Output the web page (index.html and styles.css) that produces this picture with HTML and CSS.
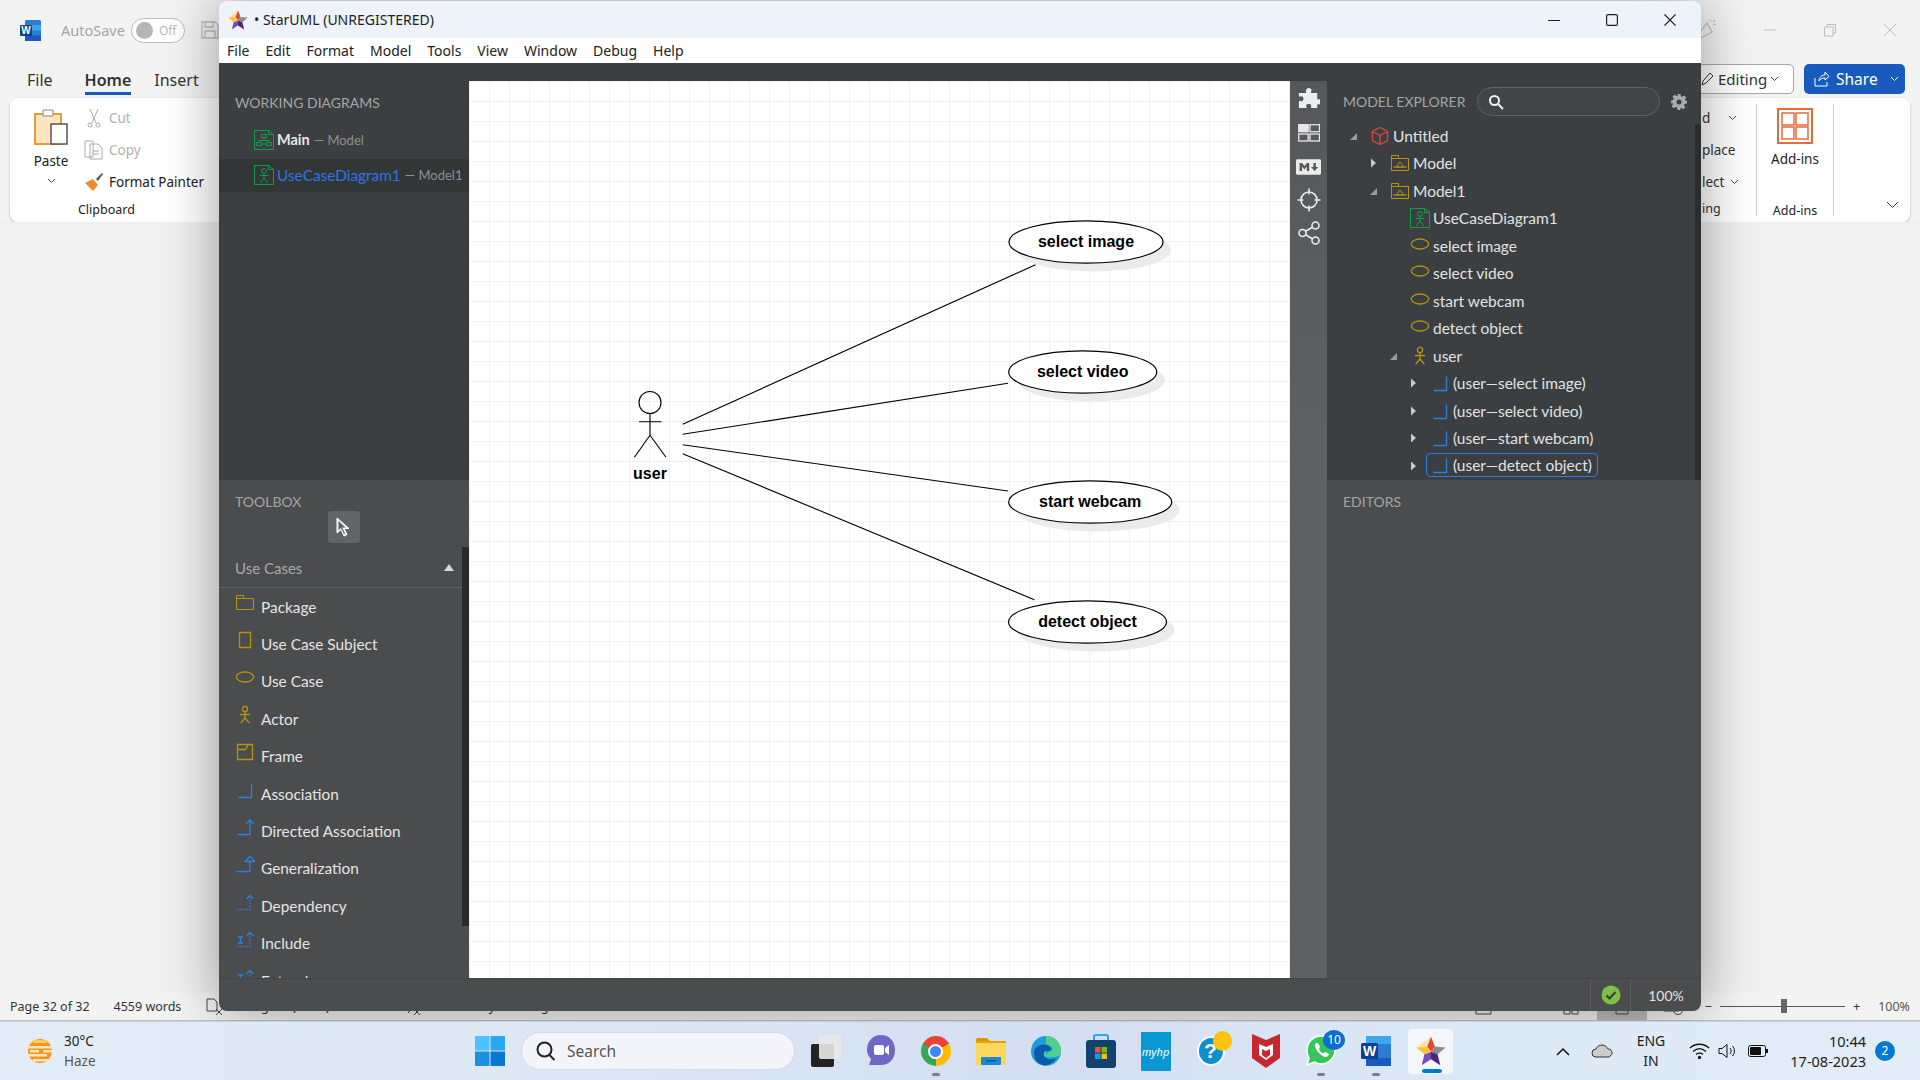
FILE: index.html
```html
<!DOCTYPE html>
<html lang="en">
<head>
<meta charset="utf-8">
<title>StarUML over Word</title>
<link rel="stylesheet" href="styles.css">
</head>
<body>
<svg class="sprite" xmlns="http://www.w3.org/2000/svg">
  <symbol id="star" viewBox="0 0 20 20">
    <polygon points="10,0.5 12.6,7 10,10.5 7.4,7" fill="#e8452f"/>
    <polygon points="12.6,7 19.8,7.6 14.4,12.2 10,10.5" fill="#8d8d8d"/>
    <polygon points="14.4,12.2 16.2,19.5 10,15.5 10,10.5" fill="#4a2a78"/>
    <polygon points="10,10.5 10,15.5 3.8,19.5 5.6,12.2" fill="#7a4bc0"/>
    <polygon points="7.4,7 10,10.5 5.6,12.2 0.2,7.6" fill="#fbc531"/>
    <polygon points="10,0.5 7.4,7 0.2,7.6" fill="#f7d774" opacity=".6"/>
  </symbol>
  <symbol id="dia-use" viewBox="0 0 20 20" fill="none" stroke="#0f9d4a">
    <path d="M.5 19.5V.5h14l5 4v15zM14.5.5v4h5"/>
    <circle cx="10" cy="6" r="2.4"/>
    <path d="M10 8.5V13M5.5 10.5h9M10 13l-4 5M10 13l4 5"/>
  </symbol>
  <symbol id="dia-class" viewBox="0 0 20 20" fill="none" stroke="#0f9d4a">
    <path d="M.5 19.5V.5h14l5 4v15zM14.5.5v4h5"/>
    <path d="M7.5 4.5h5v3h-5zM2.5 12.5h5v3h-5zM12.5 12.5h5v3h-5zM10 7.5v3M5 12.5v-2h10v2M7.5 14h5"/>
  </symbol>
  <symbol id="pkg" viewBox="0 0 20 20" fill="none" stroke="#b8930f">
    <path d="M1.5 17.5V2.5h7v3h10v12zM1.5 5.5h7"/>
    <path d="M6 14h8l-4-5zM3 14h14"/>
  </symbol>
  <symbol id="pkg-plain" viewBox="0 0 20 20" fill="none" stroke="#b8930f">
    <path d="M1.5 16.5V2.5h7v3h10v11zM1.5 5.5h7"/>
  </symbol>
  <symbol id="subject" viewBox="0 0 20 20" fill="none" stroke="#b8930f" stroke-width="1.3">
    <path d="M4.5 2.5h11v15h-11z"/>
  </symbol>
  <symbol id="ell" viewBox="0 0 20 20" fill="none" stroke="#b8930f" stroke-width="1.3">
    <ellipse cx="10" cy="10" rx="8.7" ry="5"/>
  </symbol>
  <symbol id="actor" viewBox="0 0 20 20" fill="none" stroke="#b8930f" stroke-width="1.3">
    <circle cx="10" cy="4" r="2.6"/>
    <path d="M10 6.7v6.5M5 9.5h10M10 13l-4.300 5M10 13l4.300 5"/>
  </symbol>
  <symbol id="frame" viewBox="0 0 20 20" fill="none" stroke="#b8930f" stroke-width="1.3">
    <path d="M2.500 2.500h15v15h-15zM2.500 7.500h8l3-5"/>
  </symbol>
  <symbol id="assoc" viewBox="0 0 20 20" fill="none" stroke="#2a82dc" stroke-width="1.3">
    <path d="M3.500 17.500h13V3.500"/>
  </symbol>
  <symbol id="directed" viewBox="0 0 20 20" fill="none" stroke="#2a82dc" stroke-width="1.3">
    <path d="M2.500 17.500h12.500V3M11 7l4-4 4 4"/>
  </symbol>
  <symbol id="general" viewBox="0 0 20 20" fill="none" stroke="#2a82dc" stroke-width="1.3">
    <path d="M1.500 17.500h13.500V7M10 7.500l5-5 5 5z"/>
  </symbol>
  <symbol id="depend" viewBox="0 0 20 20" fill="none" stroke="#2a82dc" stroke-width="1.3" stroke-dasharray="1.500 1.500">
    <path d="M2.500 17.500h12.500V4"/>
    <path d="M11.500 7l3.500-3.500 3.500 3.500" stroke-dasharray="none"/>
  </symbol>
  <symbol id="incl" viewBox="0 0 20 20" fill="none" stroke="#2a82dc" stroke-width="1.3">
    <path d="M2.500 17.500h12.500V4" stroke-dasharray="1.500 1.500"/>
    <path d="M11.500 7l3.500-3.500 3.500 3.500M3 8h5M3 14h5M5.500 8v6"/>
  </symbol>
  <symbol id="tri-open" viewBox="0 0 10 10"><polygon points="9,2 9,9 2,9" fill="#9a9c9e"/></symbol>
  <symbol id="tri-closed" viewBox="0 0 10 10"><polygon points="3,0.500 8,5 3,9.500" fill="#c9cacb"/></symbol>
</svg>

<div class="desktop">
  <div class="word">
    <div class="w-title">
      <svg class="w-logo" width="21" height="21" viewBox="0 0 21 21"><rect x="5" width="16" height="21" rx="1.500" fill="#2b7cd3"/><rect x="5" y="5" width="16" height="5.500" fill="#41a5ee"/><rect x="5" y="15.500" width="16" height="5.500" fill="#185abd"/><rect y="5" width="12" height="11" rx="1" fill="#103f91"/><text x="6" y="14" class="w-logo-t" text-anchor="middle">W</text></svg>
      <span class="w-autosave">AutoSave</span>
      <span class="w-toggle"><span class="w-knob"></span><span>Off</span></span>
      <svg class="w-save" width="18" height="18" viewBox="0 0 18 18" fill="none" stroke="#bbb" stroke-width="1.300"><path d="M1 1h13l3 3v13H1zM4 1v5h8V1M4 17v-7h10v7"/></svg>
      <div class="w-title-right">
        <svg width="22" height="22" viewBox="0 0 22 22" fill="none" stroke="#c2c2c2" stroke-width="1.300"><path d="M2 17L12 4l5 9-11 6zM15 2l1-1M18 6l3-1M18 3l2-2"/></svg>
        <svg width="14" height="14" viewBox="0 0 14 14" fill="none" stroke="#bdbdbd"><path d="M1 7h12"/></svg>
        <svg width="14" height="14" viewBox="0 0 14 14" fill="none" stroke="#bdbdbd"><path d="M1.500 4h8.500v9h-8.500zM4 4V1.500h8.500V10H10"/></svg>
        <svg width="14" height="14" viewBox="0 0 14 14" fill="none" stroke="#bdbdbd"><path d="M1 1l12 12M13 1L1 13"/></svg>
      </div>
    </div>
    <div class="w-tabs">
      <span class="w-tab w-tab-file">File</span>
      <span class="w-tab w-tab-on">Home</span>
      <span class="w-tab">Insert</span>
      <div class="w-actions">
        <span class="w-edit">
          <svg width="14" height="14" viewBox="0 0 14 14" fill="none" stroke="#333"><path d="M1 13l1-4 7-8 3 3-7 7z"/></svg>
          Editing
          <svg width="9" height="6" viewBox="0 0 9 6" fill="none" stroke="#444"><path d="M1 1l3.500 3.500L8 1"/></svg>
        </span>
        <span class="w-share">
          <svg width="16" height="16" viewBox="0 0 16 16" fill="none" stroke="#fff"><path d="M1 7v8h12v-4M5 10c0-4 3-6 6-6V1l4 4.500L11 9V7c-3 0-5 1-6 3z"/></svg>
          Share
          <svg class="w-share-c" width="9" height="6" viewBox="0 0 9 6" fill="none" stroke="#fff"><path d="M1 1l3.500 3.500L8 1"/></svg>
        </span>
      </div>
    </div>
    <div class="w-ribbon">
      <div class="w-paste">
        <svg width="36" height="38" viewBox="0 0 36 38"><path d="M2 6h26v30H2z" fill="#fde6bf" stroke="#ee9b33" stroke-width="2"/><path d="M10 2h10v6H10z" fill="#fff" stroke="#888"/><rect x="18" y="16" width="16" height="20" fill="#fff" stroke="#555" stroke-width="1.500"/></svg>
        <span class="w-paste-l">Paste</span>
        <svg width="9" height="6" viewBox="0 0 9 6" fill="none" stroke="#444"><path d="M1 1l3.500 3.500L8 1"/></svg>
      </div>
      <div class="w-clip">
        <div class="w-clip-row w-dim"><svg width="20" height="20" viewBox="0 0 20 20" fill="none" stroke="#aaa"><path d="M6 1l6 14M14 1L8 15"/><circle cx="6" cy="17" r="2"/><circle cx="14" cy="17" r="2"/></svg>Cut</div>
        <div class="w-clip-row w-dim"><svg width="20" height="20" viewBox="0 0 20 20" fill="none" stroke="#aaa"><path d="M1 1h8v16H1zM6 4h8l4 4v11H6zM9 11h6M9 14h6"/></svg>Copy</div>
        <div class="w-clip-row"><svg width="20" height="20" viewBox="0 0 20 20"><path d="M1 11l8-4 5 6-5 6z" fill="#ee8a2f"/><path d="M12 7l6-6 1 1-5 7z" fill="#555"/></svg>Format Painter</div>
      </div>
      <span class="w-group-l w-group-clip">Clipboard</span>
      <div class="w-ribbon-right">
        <div class="w-cut-group">
          <span class="w-line w-line-a">d<svg width="9" height="6" viewBox="0 0 9 6" fill="none" stroke="#444"><path d="M1 1l3.500 3.500L8 1"/></svg></span>
          <span class="w-line">place</span>
          <span class="w-line w-line-c">lect<svg width="9" height="6" viewBox="0 0 9 6" fill="none" stroke="#444"><path d="M1 1l3.500 3.500L8 1"/></svg></span>
          <span class="w-group-l w-group-ing">ing</span>
        </div>
        <div class="w-addins">
          <svg width="36" height="36" viewBox="0 0 36 36" fill="none" stroke="#e8693c" stroke-width="1.500"><rect x="1" y="1" width="34" height="34" stroke-width="2"/><rect x="5" y="5" width="12" height="12"/><rect x="19" y="5" width="12" height="12"/><rect x="5" y="19" width="12" height="12"/><rect x="19" y="19" width="12" height="12"/></svg>
          <span class="w-addins-l">Add-ins</span>
          <span class="w-group-l">Add-ins</span>
        </div>
        <div class="w-collapse"><svg width="13" height="8" viewBox="0 0 13 8" fill="none" stroke="#333"><path d="M1 1l5.500 5.500L12 1"/></svg></div>
      </div>
    </div>
    <div class="w-doc"></div>
    <div class="w-status">
      <span>Page 32 of 32</span>
      <span class="w-words">4559 words</span>
      <svg class="w-proof" width="17" height="18" viewBox="0 0 17 18" fill="none" stroke="#444"><path d="M1 1h7l3 3v9H1zM10 11l6 6M16 11l-6 6"/></svg>
      <span class="w-lang">English (India)</span>
      <svg class="w-acc-i" width="17" height="18" viewBox="0 0 17 18" fill="none" stroke="#444"><path d="M3 2l4 9M7 11l-3 4M10 11l6 6M16 11l-6 6"/></svg>
      <span class="w-acc">Accessibility: Investigate</span>
      <div class="w-zoomer">
        <svg class="w-z-focus" width="17" height="16" viewBox="0 0 17 16" fill="none" stroke="#444"><path d="M1 4V1h15v3M1 12v3h15v-3M4 5h9v6H4z"/></svg>
        <span class="w-focus">Focus</span>
        <svg class="w-z-book" width="16" height="16" viewBox="0 0 16 16" fill="none" stroke="#444"><path d="M1 3h6v12H1zM9 3h6v12H9z"/></svg>
        <span class="w-view"><svg width="14" height="16" viewBox="0 0 14 16" fill="none" stroke="#444"><path d="M1 1h12v14H1z"/></svg></span>
        <svg class="w-z-web" width="21" height="16" viewBox="0 0 21 16" fill="none" stroke="#444"><path d="M1 1h15v11H1z"/><circle cx="15" cy="11" r="4.500"/></svg>
        <span>−</span>
        <span class="w-track"><span class="w-thumb"></span></span>
        <span>+</span>
        <span class="w-pct">100%</span>
      </div>
    </div>
  </div>

  <div class="taskbar">
    <div class="weather">
      <svg width="28" height="28" viewBox="0 0 28 28"><circle cx="15" cy="14" r="12" fill="#f7941d"/><path d="M8 3h14v3H8z" fill="#ffcf4a"/><g fill="#f6e7c0"><rect x="1" y="9" width="26" height="2.500"/><rect x="5" y="13" width="9" height="2.500"/><rect x="18" y="13" width="9" height="2.500"/><rect x="0" y="17" width="22" height="2.500"/><rect x="8" y="22" width="18" height="2.500"/></g></svg>
      <div class="weather-t"><span>30°C</span><span class="weather-sub">Haze</span></div>
    </div>
    <div class="start"><svg width="30" height="30" viewBox="0 0 30 30"><rect width="14.500" height="14.500" fill="#4cc2ff"/><rect x="15.500" width="14.500" height="14.500" fill="#2ba6f0"/><rect y="15.500" width="14.500" height="14.500" fill="#1a90e0"/><rect x="15.500" y="15.500" width="14.500" height="14.500" fill="#0a78d0"/></svg></div>
    <div class="searchbox">
      <svg width="22" height="22" viewBox="0 0 22 22" fill="none" stroke="#222" stroke-width="2"><circle cx="9.500" cy="9.500" r="7"/><path d="M14.500 15l5 5"/></svg>
      <span>Search</span>
    </div>
    <div class="apps">
      <div class="app"><svg width="30" height="34" viewBox="0 0 30 34"><rect x="0" y="10" width="23" height="23" rx="2" fill="#222"/><rect x="8" y="1" width="22" height="24" rx="2" fill="#e9e9e9" opacity=".9"/></svg></div>
      <div class="app"><svg width="30" height="34" viewBox="0 0 30 34"><path d="M15 1c8 0 14 6 14 15s-6 15-14 15H3l2-6C2 22 1 19 1 16 1 7 7 1 15 1z" fill="#6f66c6"/><rect x="8" y="11" width="10" height="10" rx="2" fill="#fff"/><path d="M19 14l4-3v10l-4-3z" fill="#fff"/></svg></div>
      <div class="app app-run"><span class="chrome"><span class="chrome-in"></span></span></div>
      <div class="app"><svg width="30" height="28" viewBox="0 0 30 28"><path d="M0 3a2 2 0 0 1 2-2h9l3 3v4H0z" fill="#d99a00"/><rect y="4" width="30" height="24" rx="1" fill="#fbd75b"/><rect y="4" width="30" height="2" fill="#e6a400"/><rect x="5" y="20" width="20" height="8" rx="1" fill="#1b87d8"/><rect x="10" y="23" width="10" height="1.500" fill="#0b4f8c"/></svg></div>
      <div class="app"><svg width="30" height="30" viewBox="0 0 30 30"><circle cx="15" cy="15" r="15" fill="#1b9de2"/><path d="M15 0a15 15 0 0 1 15 15c0 4-3 6-7 6H15c0-7 8-4 6-9S5 9 5 17c0 7 7 13 14 12.500A15 15 0 0 1 15 30" fill="#4fd18b"/><path d="M3 17c0-9 14-11 17-5 1 2-1 3-4 3-5 0-4 6 1 8 4 1 7 0 9-2-3 6-9 9-14 8C7 28 3 23 3 17z" fill="#0c5ba8"/></svg></div>
      <div class="app"><svg width="30" height="34" viewBox="0 0 30 34"><path d="M8 8V3a2 2 0 0 1 2-2h10a2 2 0 0 1 2 2v5" fill="none" stroke="#2fa6e8" stroke-width="2"/><rect y="6" width="30" height="28" rx="3" fill="#14426f"/><rect x="9" y="13" width="5.500" height="5.500" fill="#f25022"/><rect x="15.500" y="13" width="5.500" height="5.500" fill="#7fba00"/><rect x="9" y="19.500" width="5.500" height="5.500" fill="#00a4ef"/><rect x="15.500" y="19.500" width="5.500" height="5.500" fill="#ffb900"/></svg></div>
      <div class="app"><span class="myhp">myhp</span></div>
      <div class="app app-help"><span class="help">?</span><span class="help-dot"></span></div>
      <div class="app"><svg width="28" height="34" viewBox="0 0 28 34"><path d="M0 0l14 6 14-6v24l-14 10L0 24z" fill="#c5282f"/><path d="M7 10l7 3 7-3v11l-7 5-7-5z" fill="#fff"/><path d="M10 15l4 2 4-2v6l-4 3-4-3z" fill="#c5282f"/></svg></div>
      <div class="app app-run app-wa"><svg width="30" height="32" viewBox="0 0 30 32"><path d="M15 1a14 14 0 0 1 0 28c-3 0-5-1-7-2l-7 3 2-7c-1-2-2-4-2-8A14 14 0 0 1 15 1z" fill="#37c45a" stroke="#fff" stroke-width="1.500"/><path d="M10 8c-2 2-1 6 3 10s7 5 9 3l1-2-4-2-1.500 1.500c-2-.5-4-3-4.500-4.500L14 12l-2-4z" fill="#fff"/></svg><span class="wa-badge">10</span></div>
      <div class="app app-run"><svg width="30" height="30" viewBox="0 0 30 30"><rect x="5" width="25" height="30" rx="2" fill="#2b7cd3"/><rect x="5" y="0" width="25" height="8" fill="#41a5ee"/><rect x="5" y="22" width="25" height="8" fill="#185abd"/><rect y="7" width="17" height="16" rx="1.500" fill="#103f91"/><text x="8.500" y="20" class="app-w" text-anchor="middle">W</text></svg></div>
      <div class="app app-star"><svg width="30" height="30"><use href="#star"/></svg><span class="star-bar"></span></div>
    </div>
    <div class="tray">
      <svg width="14" height="9" viewBox="0 0 14 9" fill="none" stroke="#111" stroke-width="1.500"><path d="M1 8l6-6 6 6"/></svg>
      <svg class="tray-cloud" width="22" height="14" viewBox="0 0 22 14"><path d="M5 13a4 4 0 0 1 0-8c1-3 4-4 6-4 3 0 5 2 6 4 3 0 4 2 4 4s-2 4-4 4z" fill="#ccc" stroke="#333"/></svg>
      <div class="tray-lang"><span>ENG</span><span>IN</span></div>
      <svg class="tray-wifi" width="21" height="16" viewBox="0 0 21 16" fill="none" stroke="#111" stroke-width="1.300"><path d="M1 5c5-5 14-5 19 0M4 8.500c4-3.500 9-3.500 13 0M7 11.500c2-1.500 5-1.500 7 0"/><circle cx="10.500" cy="14.500" r="1" fill="#111"/></svg>
      <svg width="18" height="16" viewBox="0 0 18 16" fill="none" stroke="#111"><path d="M1 5.500v5h3l5 4v-13l-5 4zM12 5c1.500 2 1.500 4 0 6M14.500 3c2.500 3 2.500 7 0 10"/></svg>
      <svg class="tray-batt" width="20" height="12" viewBox="0 0 20 12"><rect x=".5" y=".5" width="17" height="11" rx="2" fill="none" stroke="#111"/><rect x="2" y="2" width="11" height="8" rx="1" fill="#111"/><rect x="18" y="4" width="2" height="4" fill="#111"/></svg>
      <div class="tray-clock"><span>10:44</span><span>17-08-2023</span></div>
      <span class="tray-badge">2</span>
    </div>
  </div>

  <section class="win">
    <header class="win-title">
      <svg width="20" height="20"><use href="#star"/></svg>
      <span class="win-title-t">• StarUML (UNREGISTERED)</span>
      <div class="win-ctrl">
        <svg width="12" height="12" viewBox="0 0 12 12" fill="none" stroke="#222"><path d="M0 6.500h12"/></svg>
        <svg width="12" height="12" viewBox="0 0 12 12" fill="none" stroke="#222" stroke-width="1.200"><rect x=".6" y=".6" width="10.800" height="10.800" rx="1.500"/></svg>
        <svg width="12" height="12" viewBox="0 0 12 12" fill="none" stroke="#222" stroke-width="1.100"><path d="M.5.500l11 11M11.500.500l-11 11"/></svg>
      </div>
    </header>
    <nav class="win-menu">
      <span>File</span><span>Edit</span><span>Format</span><span>Model</span><span>Tools</span><span>View</span><span>Window</span><span>Debug</span><span>Help</span>
    </nav>
    <div class="win-main">
      <aside class="col-left">
        <div class="working">
          <h2 class="head">WORKING DIAGRAMS</h2>
          <div class="wd-row"><svg class="ic20" width="20" height="20"><use href="#dia-class"/></svg><span class="wd-name">Main</span><span class="wd-sub">— Model</span></div>
          <div class="wd-row wd-on"><svg class="ic20" width="20" height="20"><use href="#dia-use"/></svg><span class="wd-name-on">UseCaseDiagram1</span><span class="wd-sub">— Model1</span></div>
        </div>
        <div class="toolbox">
          <h2 class="head head-tb">TOOLBOX</h2>
          <div class="tb-tool"><svg width="18" height="22" viewBox="0 0 18 22"><path d="M2 2l0 15 4-3.500 3 6.500 3-1.500-3-6h5z" fill="#e8e8e8" stroke="#fff"/><path d="M3.500 5l0 9 2.500-2 3 6 1-.5-3-6h3.500z" fill="#5f6266"/></svg></div>
          <div class="tb-body">
            <div class="tb-content">
              <div class="tb-sec"><span>Use Cases</span><span class="tb-up"></span></div>
              <div class="tb-row"><svg class="tb-ic" width="20" height="20"><use href="#pkg-plain"/></svg>Package</div>
              <div class="tb-row"><svg class="tb-ic" width="20" height="20"><use href="#subject"/></svg>Use Case Subject</div>
              <div class="tb-row"><svg class="tb-ic" width="20" height="20"><use href="#ell"/></svg>Use Case</div>
              <div class="tb-row"><svg class="tb-ic" width="20" height="20"><use href="#actor"/></svg>Actor</div>
              <div class="tb-row"><svg class="tb-ic" width="20" height="20"><use href="#frame"/></svg>Frame</div>
              <div class="tb-row"><svg class="tb-ic" width="20" height="20"><use href="#assoc"/></svg>Association</div>
              <div class="tb-row"><svg class="tb-ic" width="20" height="20"><use href="#directed"/></svg>Directed Association</div>
              <div class="tb-row"><svg class="tb-ic" width="20" height="20"><use href="#general"/></svg>Generalization</div>
              <div class="tb-row"><svg class="tb-ic" width="20" height="20"><use href="#depend"/></svg>Dependency</div>
              <div class="tb-row"><svg class="tb-ic" width="20" height="20"><use href="#incl"/></svg>Include</div>
              <div class="tb-row"><svg class="tb-ic" width="20" height="20"><use href="#incl"/></svg>Extend</div>
            </div>
            <div class="tb-scroll"></div>
          </div>
        </div>
      </aside>

      <div class="col-center">
        <div class="canvas">
          <svg class="diagram" width="821" height="897" viewBox="469 81 821 897">
            <g class="d-shadow">
              <ellipse cx="1094" cy="250" rx="77" ry="21.500"/>
              <ellipse cx="1091" cy="380" rx="74" ry="21.500"/>
              <ellipse cx="1098" cy="510" rx="81.500" ry="21.500"/>
              <ellipse cx="1095.500" cy="630" rx="79" ry="21.500"/>
            </g>
            <g class="d-line">
              <path d="M682.700 424.300L1035.500 264.700"/>
              <path d="M682.700 434.300L1008 383.300"/>
              <path d="M682.700 444.700L1008 491"/>
              <path d="M682.700 453.700L1034.400 599.700"/>
              <circle cx="650" cy="402.500" r="11"/>
              <path d="M639 421.700H661.500M650 413.500V435.300M650 435.300L634.400 457.300M650 435.300L666 457.300"/>
            </g>
            <g class="d-node">
              <ellipse cx="1086" cy="242" rx="77" ry="21.200"/>
              <ellipse cx="1082.700" cy="372" rx="74" ry="21.200"/>
              <ellipse cx="1090.200" cy="502" rx="81.500" ry="21.200"/>
              <ellipse cx="1087.500" cy="622" rx="79" ry="21.200"/>
            </g>
            <g class="d-text" text-anchor="middle">
              <text x="1086" y="241" dy=".4em">select image</text>
              <text x="1082.700" y="371" dy=".4em">select video</text>
              <text x="1090.200" y="501" dy=".4em">start webcam</text>
              <text x="1087.500" y="621" dy=".4em">detect object</text>
              <text x="650" y="479">user</text>
            </g>
          </svg>
        </div>
        <div class="rail">
          <svg width="22" height="22" viewBox="0 0 24 24"><path fill="#eceded" d="M9 3.500C9 2 10.200 1 11.800 1s2.900 1 2.900 2.500c0 1-.7 1.500-.7 2.200 0 .6.500.8 1.200.8H21v6c0 .7.300 1 .8 1 .6 0 1-.5 1.700-.5.800 0 .5 2 .5 3s.2 3-.5 3c-.7 0-1.100-.5-1.700-.5-.5 0-.8.300-.8 1V23h-6c-.7 0-1-.3-1-.8 0-.6.500-1 .5-1.700 0-1.300-1.200-2-2.800-2s-2.800.7-2.800 2c0 .7.600 1.100.6 1.700 0 .5-.3.800-1 .8H1v-7c0-.7.400-1 .9-1 .6 0 1 .6 1.900.6 1.300 0 2.200-1.200 2.200-2.800S5.100 10 3.800 10c-.9 0-1.300.6-1.900.6-.5 0-.9-.3-.9-1V6.500h7c.7 0 1-.3 1-.8 0-.7-.5-1.200-.5-2.200z"/></svg>
          <svg width="22" height="18" viewBox="0 0 22 18" fill="none" stroke="#e6e6e6" stroke-width="1.300"><rect x=".7" y=".7" width="9.500" height="7" fill="#e6e6e6"/><rect x="12" y=".7" width="9.500" height="7"/><rect x=".7" y="10" width="9.500" height="7"/><rect x="12" y="10" width="9.500" height="7"/></svg>
          <svg width="25" height="16" viewBox="0 0 208 128"><rect width="208" height="128" rx="12" fill="#ececec"/><path fill="#55575a" d="M30 98V30h20l20 25 20-25h20v68H90V59L70 84 50 59v39zm125 0l-30-33h20V30h20v35h20z"/></svg>
          <svg width="24" height="24" viewBox="0 0 24 24" fill="none" stroke="#ececec" stroke-width="1.600"><circle cx="12" cy="12" r="8"/><path d="M12 .5v6M12 17.500v6M.5 12h6M17.500 12h6"/></svg>
          <svg width="22" height="24" viewBox="0 0 22 24" fill="none" stroke="#ececec" stroke-width="1.600"><circle cx="17.500" cy="4.500" r="3.500"/><circle cx="4.500" cy="12" r="3.500"/><circle cx="17.500" cy="19.500" r="3.500"/><path d="M7.500 10.200l7-4M7.500 13.800l7 4"/></svg>
        </div>
      </div>

      <aside class="col-right">
        <div class="explorer">
          <div class="ex-head">
            <h2 class="head head-ex">MODEL EXPLORER</h2>
            <div class="ex-search"><svg width="16" height="16" viewBox="0 0 16 16" fill="none" stroke="#f0f0f0" stroke-width="2"><circle cx="6.500" cy="6.500" r="4.500"/><path d="M10 10l5 5"/></svg></div>
            <svg class="ex-gear" width="16" height="16" viewBox="0 0 16 16"><path fill="#a9abac" fill-rule="evenodd" d="M6.500 0h3l.4 2.200 1.400.6L13.200 1.500l2.100 2.100-1.300 1.900.6 1.400L16 6.500v3l-2.400.4-.6 1.400 1.300 1.900-2.100 2.100-1.900-1.300-1.400.6L9.500 16h-3l-.4-2.400-1.400-.6-1.900 1.300-2.100-2.100L2 10.300l-.6-1.400L0 9.500v-3l2.200-.4.600-1.400L1.500 2.800l2.100-2.100 1.900 1.300 1.400-.6zM8 5.500a2.500 2.500 0 1 0 0 5 2.500 2.500 0 0 0 0-5z"/></svg>
          </div>
          <div class="tree">
            <div class="t-row lv0"><svg class="t-arrow" width="10" height="10"><use href="#tri-open"/></svg><svg class="t-ic" width="20" height="20" viewBox="0 0 20 20" fill="none" stroke="#d24a3c" stroke-width="1.400"><path d="M10 1.500l7.500 4v9l-7.500 4-7.500-4v-9zM2.500 5.500l7.500 4 7.500-4M10 9.500v9"/></svg><span>Untitled</span></div>
            <div class="t-row lv1"><svg class="t-arrow" width="10" height="10"><use href="#tri-closed"/></svg><svg class="t-ic" width="20" height="20"><use href="#pkg"/></svg><span>Model</span></div>
            <div class="t-row lv1"><svg class="t-arrow" width="10" height="10"><use href="#tri-open"/></svg><svg class="t-ic" width="20" height="20"><use href="#pkg"/></svg><span>Model1</span></div>
            <div class="t-row lv2"><span class="t-arrow"></span><svg class="t-ic" width="20" height="20"><use href="#dia-use"/></svg><span>UseCaseDiagram1</span></div>
            <div class="t-row lv2"><span class="t-arrow"></span><svg class="t-ic t-up" width="20" height="20"><use href="#ell"/></svg><span>select image</span></div>
            <div class="t-row lv2"><span class="t-arrow"></span><svg class="t-ic t-up" width="20" height="20"><use href="#ell"/></svg><span>select video</span></div>
            <div class="t-row lv2"><span class="t-arrow"></span><svg class="t-ic t-up" width="20" height="20"><use href="#ell"/></svg><span>start webcam</span></div>
            <div class="t-row lv2"><span class="t-arrow"></span><svg class="t-ic t-up" width="20" height="20"><use href="#ell"/></svg><span>detect object</span></div>
            <div class="t-row lv2"><svg class="t-arrow" width="10" height="10"><use href="#tri-open"/></svg><svg class="t-ic" width="20" height="20"><use href="#actor"/></svg><span>user</span></div>
            <div class="t-row lv3"><svg class="t-arrow" width="10" height="10"><use href="#tri-closed"/></svg><svg class="t-ic" width="20" height="20"><use href="#assoc"/></svg><span>(user—select image)</span></div>
            <div class="t-row lv3"><svg class="t-arrow" width="10" height="10"><use href="#tri-closed"/></svg><svg class="t-ic" width="20" height="20"><use href="#assoc"/></svg><span>(user—select video)</span></div>
            <div class="t-row lv3"><svg class="t-arrow" width="10" height="10"><use href="#tri-closed"/></svg><svg class="t-ic" width="20" height="20"><use href="#assoc"/></svg><span>(user—start webcam)</span></div>
            <div class="t-row lv3"><svg class="t-arrow" width="10" height="10"><use href="#tri-closed"/></svg><span class="t-sel"><svg class="t-ic" width="20" height="20"><use href="#assoc"/></svg><span>(user—detect object)</span></span></div>
          </div>
          <div class="ex-scroll"></div>
        </div>
        <div class="editors"><h2 class="head">EDITORS</h2></div>
      </aside>
    </div>
    <footer class="win-status">
      <span class="st-cell"><svg width="20" height="20" viewBox="0 0 20 20"><circle cx="10" cy="10" r="9.500" fill="#7cc142"/><path d="M5.500 10.500l3 3 6-6.500" fill="none" stroke="#3a3d3f" stroke-width="2.200"/></svg></span>
      <span class="st-zoom">100%</span>
    </footer>
  </section>
</div>
</body>
</html>
```

FILE: styles.css
```css
* { box-sizing: border-box; }
html, body { margin: 0; padding: 0; width: 1920px; height: 1080px; overflow: hidden; }
body { font-family: "Open Sans", "Noto Sans", sans-serif; color: #222; background: #f1f1f1; }
.sprite { display: none; }
svg { flex: none; display: block; }

.desktop { position: relative; width: 1920px; height: 1080px; display: flex; flex-direction: column; overflow: hidden; }

/* Word behind */
.word { flex: 1; display: flex; flex-direction: column; background: #f3f3f3; min-height: 0; }
.w-title { height: 60px; flex: none; display: flex; align-items: center; padding: 0 20px; font-size: 14px; color: #a5a5a5; }
.w-logo-t { font: bold 10px "Liberation Sans", sans-serif; fill: #fff; }
.app-w { font: bold 14px "Liberation Sans", sans-serif; fill: #fff; }
.w-autosave { margin-left: 20px; font-family: "Noto Sans", sans-serif; font-size: 14.5px; }
.w-toggle { margin-left: 6px; width: 54px; height: 25px; border: 1px solid #bdbdbd; border-radius: 13px; background: #fff; display: flex; align-items: center; gap: 6px; padding-left: 4px; font-size: 12px; color: #b5b5b5; }
.w-knob { width: 17px; height: 17px; border-radius: 50%; background: #b5b5b5; }
.w-save { margin-left: 16px; }
.w-title-right { margin-left: auto; display: flex; align-items: center; gap: 46px; margin-right: 3px; }
.w-tabs { height: 38px; flex: none; display: flex; align-items: flex-start; padding-left: 27px; gap: 23px; font-size: 16px; color: #333; font-family: "Noto Sans", sans-serif; }
.w-tab { height: 35px; display: flex; align-items: center; padding-top: 5px; }
.w-tab-file { margin-right: 9px; }
.w-tab-on { font-weight: 600; color: #333; border-bottom: 3px solid #185abd; padding-top: 8px; }
.w-actions { margin-left: auto; margin-right: 15px; margin-top: 4px; display: flex; gap: 10px; align-items: center; }
.w-edit { width: 104px; height: 30px; display: flex; align-items: center; gap: 3px; padding-left: 10px; background: #fff; border: 1px solid #a8a8a8; border-radius: 5px; font-size: 15px; }
.w-share { width: 101px; height: 30px; display: flex; align-items: center; gap: 6px; padding-left: 10px; background: #185abd; color: #fff; border-radius: 5px; font-size: 15.5px; }
.w-share-c { margin-left: 6px; }
.w-ribbon { margin: 0 10px; height: 124px; flex: none; background: #fff; border-radius: 8px; box-shadow: 0 1px 3px rgba(0,0,0,.2); display: flex; font-family: "Noto Sans", sans-serif; font-size: 13.5px; }
.w-paste { width: 66px; margin-left: 8px; display: flex; flex-direction: column; align-items: center; padding-top: 10px; }
.w-paste-l { margin: 6px 0 8px; font-size: 13.5px; line-height: 18px; }
.w-clip { padding-top: 4px; display: flex; flex-direction: column; }
.w-clip-row { height: 32px; flex: none; display: flex; align-items: center; gap: 5px; font-size: 13.5px; white-space: nowrap; }
.w-dim { color: #b0b0b0; }
.w-group-l { font-size: 12.5px; }
.w-group-clip { align-self: flex-end; margin: 0 0 4px -126px; }
.w-ribbon-right { margin-left: auto; display: flex; height: 100%; }
.w-cut-group { width: 66px; padding-left: 11px; display: flex; flex-direction: column; color: #333; border-right: 1px solid #ccc; margin-top: 6px; height: 112px; }
.w-line { height: 32px; flex: none; display: flex; align-items: center; gap: 18px; }
.w-line-a { margin-top: -2px; }
.w-line-c { gap: 6px; }
.w-group-ing { margin-top: 2px; }
.w-addins { width: 77px; margin-top: 6px; height: 112px; display: flex; flex-direction: column; align-items: center; padding-top: 4px; border-right: 1px solid #ccc; }
.w-addins-l { margin-top: 6px; height: 52px; flex: none; }
.w-collapse { width: 76px; display: flex; align-items: flex-end; justify-content: flex-end; padding: 0 11px 13px 0; }
.w-doc { flex: 1; background: #f0f0f0; }
.w-status { height: 28px; flex: none; display: flex; align-items: center; padding: 0 10px; background: #f3f3f3; border-bottom: 1px solid #c2c2c2; font-size: 12.5px; font-family: "Noto Sans", sans-serif; color: #333; white-space: nowrap; }
.w-words { margin-left: 24px; }
.w-proof { margin-left: 25px; }
.w-lang { margin-left: 23px; }
.w-acc-i { margin-left: 74px; }
.w-acc { margin-left: 4px; }
.w-zoomer { margin-left: auto; display: flex; align-items: center; gap: 8px; }
.w-z-focus { margin-right: -4px; }
.w-focus { margin-right: 25px; }
.w-z-book { margin-right: 10px; }
.w-view { width: 50px; height: 26px; background: #bdbdbd; margin-right: 8px; display: flex; align-items: center; justify-content: center; }
.w-z-web { margin-right: 13px; }
.w-track { width: 125px; height: 1px; background: #555; position: relative; display: block; }
.w-thumb { position: absolute; left: 61px; top: -7px; width: 6px; height: 14px; background: #666; }
.w-pct { margin-left: 10px; color: #555; }

/* Taskbar */
.taskbar { position: relative; z-index: 3; height: 59px; flex: none; display: flex; align-items: center; background: linear-gradient(90deg, #e3edf7 0%, #dde7f5 30%, #d3def1 55%, #dde8f6 75%, #e2edf8 100%); border-top: 1px solid #c9d0d8; font-family: "Noto Sans", sans-serif; font-size: 14px; color: #222; }
.weather { width: 467px; padding-left: 25px; display: flex; align-items: center; gap: 11px; }
.weather-t { display: flex; flex-direction: column; line-height: 20px; font-size: 13.5px; }
.weather-sub { color: #555; }
.start { width: 46px; display: flex; justify-content: center; }
.searchbox { margin-left: 8px; width: 274px; height: 38px; border-radius: 19px; background: #f3f5fb; border: 1px solid #d4dbe8; display: flex; align-items: center; padding-left: 13px; gap: 10px; font-size: 15.5px; color: #555; }
.apps { margin-left: 3px; display: flex; }
.app { position: relative; width: 55px; height: 47px; display: flex; align-items: center; justify-content: center; }
.app-run::after { content: ""; position: absolute; left: 24px; bottom: -1px; width: 8px; height: 3px; border-radius: 2px; background: #7a7f88; }
.chrome { width: 30px; height: 30px; border-radius: 50%; background: conic-gradient(from -60deg, #ea4335 0 120deg, #fbbc05 120deg 240deg, #34a853 240deg 360deg); display: flex; align-items: center; justify-content: center; }
.chrome-in { width: 15px; height: 15px; border-radius: 50%; background: #4285f4; border: 2.5px solid #fff; }
.myhp { width: 30px; height: 39px; background: #0b97d3; color: #fff; display: flex; align-items: center; justify-content: center; font-style: italic; font-size: 11px; }
.help { width: 28px; height: 30px; border-radius: 50%; background: #0f8fd0; border: 2px solid #fff; color: #fff; font: bold 21px/26px "Liberation Sans", sans-serif; text-align: center; }
.help-dot { position: absolute; left: 30px; top: 3px; width: 19px; height: 20px; border-radius: 50%; background: #ffc20e; }
.wa-badge { position: absolute; left: 30px; top: 2px; width: 22px; height: 20px; border-radius: 50%; background: #0a6fd0; color: #fff; font-size: 12px; line-height: 20px; text-align: center; }
.app-star { width: 47px; margin-left: 4px; background: #f3f6fb; border-radius: 5px; border: 1px solid #e4e8ef; }
.star-bar { position: absolute; left: 14px; bottom: 1px; width: 20px; height: 3.500px; border-radius: 2px; background: #0078d4; }
.tray { margin-left: auto; display: flex; align-items: center; padding-right: 25px; }
.tray-cloud { margin-left: 21px; }
.tray-lang { width: 60px; margin-left: 8px; display: flex; flex-direction: column; align-items: center; line-height: 20px; font-size: 14px; }
.tray-wifi { margin-left: 8px; margin-right: 8px; }
.tray-batt { margin-left: 12px; }
.tray-clock { margin-left: 14px; width: 84px; display: flex; flex-direction: column; align-items: flex-end; line-height: 20px; font-size: 14.5px; white-space: nowrap; }
.tray-badge { margin-left: 9px; width: 20px; height: 20px; border-radius: 50%; background: #0078d4; color: #fff; text-align: center; font-size: 12px; line-height: 20px; }

/* StarUML window */
.win { position: absolute; z-index: 2; left: 219px; top: 1px; width: 1482px; height: 1010px; display: flex; flex-direction: column; border-radius: 8px; overflow: hidden; box-shadow: 0 0 55px rgba(0,0,0,.38); font-family: Lato, "Noto Sans", sans-serif; }
.win-title { height: 37px; flex: none; display: flex; align-items: center; padding-left: 9px; background: #edf2fb; font-family: "Noto Sans", sans-serif; font-size: 14px; color: #222; gap: 6px; }
.win-ctrl { margin-left: auto; margin-right: 25px; display: flex; gap: 46px; }
.win-menu { height: 25px; flex: none; display: flex; align-items: center; padding-left: 8px; gap: 16px; background: #fff; font-family: "Noto Sans", sans-serif; font-size: 14px; color: #222; }
.win-main { flex: 1; display: flex; min-height: 0; background: #3b3f42; }
.head { margin: 0; font-size: 14px; font-weight: 400; color: #a3a5a7; line-height: 20px; white-space: nowrap; }
.col-left { width: 250px; flex: none; display: flex; flex-direction: column; }
.working { height: 417px; flex: none; padding-top: 29px; background: #3b3f42; }
.working .head { padding-left: 16px; margin-bottom: 10px; padding-top: 1px; }
.wd-row { height: 33px; margin-bottom: 3.500px; display: flex; align-items: center; padding-left: 35px; font-size: 15.400px; color: #e6e6e6; white-space: nowrap; }
.wd-on { background: #323637; margin-top: -1px; }
.wd-name { margin-left: 3px; font-weight: 700; font-size: 14.500px; }
.wd-name-on { margin-left: 3px; color: #2f73ea; }
.wd-sub { margin-left: 4px; font-size: 13px; color: #8e9092; }
.toolbox { flex: 1; min-height: 0; background: #4b4c4e; overflow: hidden; display: flex; flex-direction: column; }
.head-tb { padding: 12px 0 0 16px; height: 31px; flex: none; }
.tb-tool { margin-left: 109px; width: 32px; height: 32px; border-radius: 3px; background: #626568; display: flex; align-items: center; justify-content: center; flex: none; }
.tb-body { display: flex; margin-top: 4px; }
.tb-content { flex: 1; min-width: 0; }
.tb-sec { height: 41px; padding: 1px 8px 0 16px; display: flex; align-items: center; justify-content: space-between; font-size: 15px; color: #a7a9ab; border-bottom: 1px solid #5d5e60; }
.tb-up { width: 0; height: 0; border-left: 5px solid transparent; border-right: 5px solid transparent; border-bottom: 7px solid #d8d8d8; }
.tb-row { height: 37.400px; display: flex; align-items: center; padding-left: 16px; gap: 6px; font-size: 15.400px; color: #e4e4e4; white-space: nowrap; }
.tb-ic { margin-top: -8px; }
.tb-scroll { width: 7px; height: 379px; background: #2a2a2a; flex: none; }
.col-center { width: 858px; flex: none; padding-top: 18px; display: flex; }
.canvas { width: 821px; height: 100%; background-color: #fff; background-image: linear-gradient(#f0f0f0 1px, transparent 1px), linear-gradient(90deg, #f0f0f0 1px, transparent 1px); background-size: 20px 20px; }
.diagram { font-family: "Liberation Sans", sans-serif; }
.d-shadow { fill: #ebebeb; }
.d-line { fill: none; stroke: #000; stroke-width: 1.100; }
.d-node { fill: #fff; stroke: #000; stroke-width: 1.200; }
.d-text { font-size: 16px; font-weight: 700; fill: #000; }
.rail { width: 37px; height: 100%; background: linear-gradient(#55575a, #5f6062 40%); display: flex; flex-direction: column; align-items: center; }
.rail svg:nth-child(1) { margin-top: 6px; }
.rail svg:nth-child(2) { margin-top: 15px; }
.rail svg:nth-child(3) { margin-top: 17px; }
.rail svg:nth-child(4) { margin-top: 13px; }
.rail svg:nth-child(5) { margin-top: 9px; }
.col-right { width: 374px; flex: none; display: flex; flex-direction: column; }
.explorer { height: 417px; flex: none; position: relative; background: #3b3f42; }
.ex-head { display: flex; align-items: center; padding: 24px 0 0 16px; }
.head-ex { width: 134px; padding-top: 1px; }
.ex-search { width: 183px; height: 29px; border: 1px solid #5e6163; border-radius: 15px; background: #434445; display: flex; align-items: center; padding-left: 10px; }
.ex-gear { margin-left: 11px; }
.tree { margin-top: 6px; font-size: 15.500px; color: #e2e2e2; }
.t-row { height: 27.500px; display: flex; align-items: center; white-space: nowrap; }
.lv0 { padding-left: 16px; } .lv1 { padding-left: 36px; } .lv2 { padding-left: 56px; } .lv3 { padding-left: 76px; }
.t-arrow { width: 10px; height: 10px; margin: 0 5px; flex: none; }
.t-ic { margin: 0 3px 0 7px; }
.t-up { margin-top: -4px; }
.t-sel { display: flex; align-items: center; margin-left: 3px; height: 24px; width: 172px; border: 1px solid #2a7de1; border-radius: 4px; margin-top: -1px; }
.t-sel .t-ic { margin-left: 3px; }
.ex-scroll { position: absolute; right: 0; top: 61px; bottom: 0; width: 6px; background: #2b2e30; }
.editors { flex: 1; background: #4b4c4e; padding: 12px 0 0 16px; }
.win-status { height: 33px; flex: none; display: flex; align-items: stretch; justify-content: flex-end; background: #4b4c4e; border-top: 1px solid #434446; color: #e4e4e4; font-size: 14px; }
.st-cell { width: 41px; display: flex; align-items: center; justify-content: center; border-left: 1px solid #5b5c5e; border-right: 1px solid #5b5c5e; }
.st-zoom { width: 70px; display: flex; align-items: center; justify-content: center; }
```
